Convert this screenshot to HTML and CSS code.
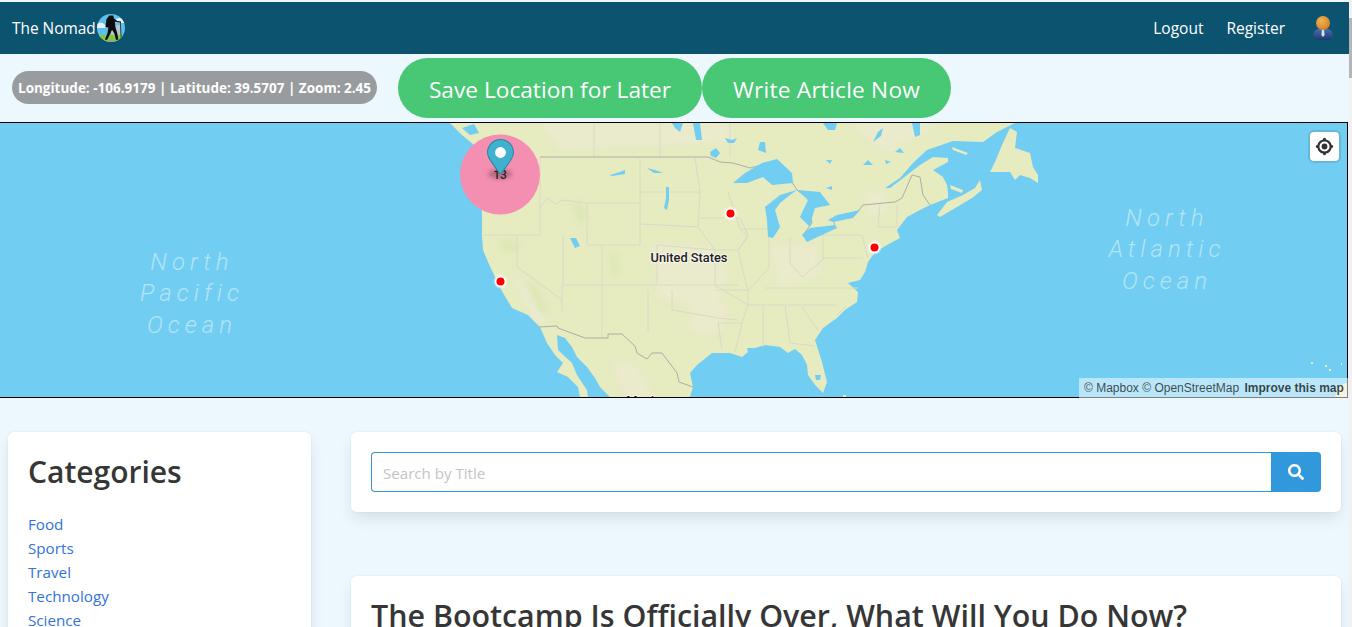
FILE: index.html
```html
<!DOCTYPE html>
<html lang="en">
<head>
  <meta charset="UTF-8" />
  <meta name="viewport" content="width=device-width, initial-scale=1.0"/>
  <title>The Nomad</title>
  <link rel="stylesheet" href="styles.css">
</head>
<body>
  <div class="page">
    <nav class="navbar">
      <a class="brand" href="#">The Nomad
        <svg class="brand-logo" width="28" height="28" viewBox="0 0 28 28">
          <defs><clipPath id="logoClip"><circle cx="14" cy="14" r="14"/></clipPath></defs>
          <g clip-path="url(#logoClip)">
            <rect width="28" height="28" fill="#5cc0ee"/>
            <path d="M0 10q4-3 7 0t6 0v4H0zM19 5q4-2 7 0t2 4h-9z" fill="#e4f5fc"/>
            <path d="M14 12h3v10h-3zM19 11h4v11h-4z" fill="#b9c6cc"/>
            <rect y="21" width="28" height="7" fill="#86c83c"/>
            <path d="M10 26h8v2h-8z" fill="#9aa0a0"/>
            <path d="M12.300 1.500l4 0 .6 3 3.500 2.500 3.700 .5-.3 1.300-4.200-.5-1.800-1 .5 5.500 2 6.500 1 6.500h-2.300l-1.500-6-2.500-4-2 4.500-2.800 5.500h-2.300l2.700-7 .8-5-3-.5 1-8z" fill="#0d0d0d"/>
            <path d="M23 8l.8 0 .8 17h-.8z" fill="#222"/>
          </g>
        </svg>
      </a>
      <div class="nav-end">
        <a class="nav-link" href="#">Logout</a>
        <a class="nav-link" href="#">Register</a>
        <svg class="nav-user" width="22" height="26" viewBox="0 0 22 26">
          <defs>
            <radialGradient id="headFill" cx=".4" cy=".35" r=".7"><stop offset="0" stop-color="#f4b455"/><stop offset="1" stop-color="#cf7f1e"/></radialGradient>
            <linearGradient id="bodyFill" x1="0" y1="0" x2="0" y2="1"><stop offset="0" stop-color="#4a74b4"/><stop offset="1" stop-color="#1c3a70"/></linearGradient>
          </defs>
          <path d="M1 21c0-5 4-8 10-8s10 3 10 8c0 3-4 4-10 4S1 24 1 21z" fill="url(#bodyFill)"/>
          <path d="M10 14h2l.6 6-1.600 2-1.600-2z" fill="#d5e2ef"/>
          <circle cx="11" cy="8" r="7" fill="url(#headFill)"/>
        </svg>
      </div>
    </nav>

    <div class="toolbar">
      <div class="coords">Longitude: -106.9179 | Latitude: 39.5707 | Zoom: 2.45</div>
      <div class="toolbar-buttons">
        <button class="pill-btn pill-save">Save Location for Later</button>
        <button class="pill-btn pill-write">Write Article Now</button>
      </div>
    </div>

    <div class="map">
      <svg class="map-canvas" width="1347" height="274" viewBox="0 123 1347 274" preserveAspectRatio="none">
        <defs>
          <filter id="soft" x="-20%" y="-20%" width="140%" height="140%"><feGaussianBlur stdDeviation="3"/></filter>
          <clipPath id="landClip">
            <path d="M450 123L462 135 474 145 480 180 482 215 482 235 483 250 488 262 495 277 503 293 512 308 528 315 540 327 547 343 555 355 563 363 557 372 568 377 578 387 580 397 588 397 587 390 577 375 572 363 558 350 557 335 565 338 572 347 577 357 587 367 595 378 600 387 610 397 690 397 693 387 690 373 697 365 712 353 730 353 742 357 748 352 747 348 755 348 765 345 780 347 788 353 795 349 802 355 807 365 808 375 815 385 823 393 827 382 822 362 815 340 823 328 837 318 845 310 857 302 858 292 848 283 860 280 865 272 868 262 875 252 887 245 900 238 897 230 907 217 920 210 930 205 948 198 948 193 947 185 943 177 933 170 948 162 948 158 933 157 920 165 907 175 890 188 885 188 900 178 913 163 927 150 953 141 983 142 997 132 1015 123z"/>
          </clipPath>
        </defs>

        <rect class="ocean" x="0" y="123" width="1347" height="274"/>

        <path class="land" d="M450 123L462 135 474 145 480 180 482 215 482 235 483 250 488 262 495 277 503 293 512 308 528 315 540 327 547 343 555 355 563 363 557 372 568 377 578 387 580 397 588 397 587 390 577 375 572 363 558 350 557 335 565 338 572 347 577 357 587 367 595 378 600 387 610 397 690 397 693 387 690 373 697 365 712 353 730 353 742 357 748 352 747 348 755 348 765 345 780 347 788 353 795 349 802 355 807 365 808 375 815 385 823 393 827 382 822 362 815 340 823 328 837 318 845 310 857 302 858 292 848 283 860 280 865 272 868 262 875 252 887 245 900 238 897 230 907 217 920 210 930 205 948 198 948 193 947 185 943 177 933 170 948 162 948 158 933 157 920 165 907 175 890 188 885 188 900 178 913 163 927 150 953 141 983 142 997 132 1015 123z"/>
        <path class="land" d="M990 172L995 162 1002 145 1010 128 1017 132 1015 148 1030 153 1033 167 1038 175 1038 183 1030 178 1020 175 1015 180 1010 172z"/>
        <path class="land" d="M937 215L947 202 963 195 975 188 980 180 982 190 972 198 957 207 940 217z"/>
        <path class="land" d="M950 185L963 190 962 193 951 189zM952 147L968 153 966 155 953 150z"/>
        <path class="land" d="M843 395h3v3h-3zM1335 397l3-9 5-4 4-1v14z"/>
        <path class="land" d="M1311 362h2v2h-2zM1325 365h2v2h-2zM1341 363h1v2h-1zM1329 369h2v2h-2z"/>

        <g clip-path="url(#landClip)">
          <g class="beige" filter="url(#soft)">
            <path d="M540 123H730V142L640 146 560 150zM650 245h60l20 30-15 30-55-5zM770 245h45l8 30-45 10zM850 123h90l-55 30zM510 270l15 10 25 40-15 5zM690 300l40 5-10 30-30-5zM610 360l25 5 20 32h-30zM865 195l18-5 6 20-20 8z"/>
          </g>
          <g class="sage" filter="url(#soft)">
            <path d="M572 205l10-3 5 18-8 4zM610 255l6-3 3 22-7 2zM525 280l12 8 12 25-8 0zM500 240l20 2-4 10-14-2z"/>
          </g>
        </g>

        <g class="borders">
          <path d="M483 235H540M540 158V235M540 208l7-10 8 6 8-4 24 3M640 158V245M594 123V157M660 123V157M730 123V157M587 203H640M587 203V245H640"/>
          <path d="M640 192H700M640 224l58 3M695 158l5 34 -2 35 17 23V285M700 218H740L748 235 738 250 715 250 657 245M517 235V267L562 300M563 235V285M602 245V338M657 245V285M562 285H738"/>
          <path d="M562 285V312M648 290V332M672 290V310L718 318 738 320M728 192L740 229 748 237 738 250 748 291M740 229H768M769 238V268L748 291 748 305 714 285M790 238V263M802 235H862M823 235V258H863M880 203L878 227H897M897 227V205"/>
          <path d="M715 290H748M765 288H858M748 305H837M718 323H742L748 305M718 323L722 350M742 323L735 352M763 305V347M785 305L790 343 815 346M802 307L818 330M837 315L846 306M862 235L868 258M825 258L802 277 790 263"/>
        </g>
        <path class="intl" d="M540 157H708L720 162 733 163 750 168 762 165 792 182 797 190 808 198 812 223 803 235 807 238 835 227 833 218 853 217 863 205 895 202 902 198 912 175 920 177 923 195 930 205"/>
        <path class="intl" d="M539 327L557 326 558 328 585 338H608V334H622L635 346 637 353 647 359 652 353H662L677 373 679 382 693 387"/>

        <g class="ocean">
          <path d="M733 183L745 173 762 163 777 159 792 173 793 183 772 185 763 177 747 183z"/>
          <path d="M765 207L780 195 797 190 790 195 780 203 775 210 780 227 773 238 768 237 767 220z"/>
          <path d="M797 190L820 192 830 205 815 208 812 218 810 227 800 217 808 200z"/>
          <path d="M802 235L810 228 835 225 837 228 807 242z"/>
          <path d="M828 220L837 215 860 210 853 218 833 222z"/>
          <path d="M610 175L620 172 625 170 625 174 612 176zM647 168L655 170 663 173 654 173zM666 187L669 187 669 200 667 210 664 208 666 198zM570 238L576 238 580 246 575 248zM672 123L683 123 680 132 675 128zM693 123L700 123 702 140 696 140zM710 152L716 148 720 153 716 158 711 156zM725 138L732 140 737 138 734 143 728 143zM823 123L837 123 835 130 828 130zM873 142L878 132 883 128 881 136zM912 123L920 123 920 135 915 137zM895 152L900 148 904 153zM863 165L868 160 873 165zM885 160L891 162 886 164zM826 160L832 160 830 164zM826 188L832 186 832 190zM760 142L765 142 766 153 758 150zM815 375L821 375 820 380 816 380z"/>
          <path d="M474 124L479 133 470 135 462 128z"/>
        </g>

        <text class="ocean-label" x="192" y="270">North</text>
        <text class="ocean-label" x="192" y="301">Pacific</text>
        <text class="ocean-label" x="192" y="333">Ocean</text>
        <text class="ocean-label" x="1167" y="226">North</text>
        <text class="ocean-label" x="1167" y="257">Atlantic</text>
        <text class="ocean-label" x="1167" y="289">Ocean</text>
        <text class="country-label" x="689" y="262">United States</text>
        <text class="country-label" x="647" y="405">Mexico</text>

        <circle class="cluster" cx="500" cy="174.500" r="40"/>
        <ellipse class="pin-shadow" cx="500" cy="174" rx="12" ry="5"/>
        <text class="cluster-count" x="500" y="179">13</text>

        <g transform="translate(487 139)">
          <path class="pin" d="M27,13.5C27,19.07 20.25,27 14.75,34.5C14.02,35.5 12.98,35.5 12.25,34.5C6.75,27 0,19.22 0,13.5C0,6.04 6.04,0 13.5,0C20.96,0 27,6.04 27,13.5Z"/>
          <path class="pin-edge" fill-rule="evenodd" d="M13.5,0C6.04,0 0,6.04 0,13.5C0,19.22 6.75,27 12.25,34.5C13,35.52 14.02,35.5 14.75,34.5C20.25,27 27,19.07 27,13.5C27,6.04 20.96,0 13.5,0ZM13.5,1C20.42,1 26,6.58 26,13.5C26,15.9 24.5,19.18 22.22,22.74C19.95,26.3 16.71,30.14 13.94,33.91C13.74,34.18 13.61,34.32 13.5,34.44C13.39,34.32 13.26,34.18 13.06,33.91C10.28,30.13 7.41,26.31 5.02,22.77C2.62,19.23 1,15.95 1,13.5C1,6.58 6.58,1 13.5,1Z"/>
          <circle class="pin-eye" cx="13.5" cy="13.500" r="5.400"/>
        </g>

        <g class="spot" transform="translate(730.500 213.500)"><circle class="spot-halo" r="7"/><circle class="spot-ring" r="5.500"/><circle class="spot-dot" r="4"/></g>
        <g class="spot" transform="translate(874.500 247.500)"><circle class="spot-halo" r="7"/><circle class="spot-ring" r="5.500"/><circle class="spot-dot" r="4"/></g>
        <g class="spot" transform="translate(500.500 281.500)"><circle class="spot-halo" r="7"/><circle class="spot-ring" r="5.500"/><circle class="spot-dot" r="4"/></g>
      </svg>

      <button class="geo-btn" aria-label="Find my location">
        <svg width="29" height="29" viewBox="0 0 20 20">
          <path d="M10 4C9 4 9 5 9 5v.1A5 5 0 0 0 5.100 9H5s-1 0-1 1 1 1 1 1h.1A5 5 0 0 0 9 14.900v.1s0 1 1 1 1-1 1-1v-.1a5 5 0 0 0 3.900-3.900h.1s1 0 1-1-1-1-1-1h-.1A5 5 0 0 0 11 5.100V5s0-1-1-1zm0 2.500a3.500 3.500 0 1 1 0 7 3.500 3.500 0 1 1 0-7z"/>
          <circle cx="10" cy="10" r="2"/>
        </svg>
      </button>
      <div class="attribution">
        <span>© Mapbox</span> <span>© OpenStreetMap</span> <strong>Improve this map</strong>
      </div>
    </div>

    <main class="content">
      <aside class="box categories">
        <h2 class="categories-title">Categories</h2>
        <ul class="category-list">
          <li><a href="#">Food</a></li>
          <li><a href="#">Sports</a></li>
          <li><a href="#">Travel</a></li>
          <li><a href="#">Technology</a></li>
          <li><a href="#">Science</a></li>
        </ul>
      </aside>
      <section class="articles">
        <div class="box search-box">
          <input class="search-input" type="text" placeholder="Search by Title">
          <button class="search-btn" aria-label="Search">
            <svg width="16" height="16" viewBox="0 0 512 512"><path d="M505 442.700L405.300 343c-4.500-4.500-10.600-7-17-7H372c27.600-35.300 44-79.700 44-128C416 93.100 322.900 0 208 0S0 93.100 0 208s93.100 208 208 208c48.300 0 92.700-16.400 128-44v16.300c0 6.400 2.500 12.500 7 17l99.700 99.700c9.400 9.400 24.600 9.400 33.900 0l28.300-28.300c9.400-9.400 9.400-24.600.1-34zM208 336c-70.700 0-128-57.200-128-128 0-70.700 57.200-128 128-128 70.700 0 128 57.200 128 128 0 70.700-57.200 128-128 128z"/></svg>
          </button>
        </div>
        <article class="box article">
          <h1 class="article-title">The Bootcamp Is Officially Over, What Will You Do Now?</h1>
        </article>
      </section>
    </main>
  </div>
  <div class="scrollbar"><div class="scrollbar-thumb"></div></div>
</body>
</html>
```

FILE: styles.css
```css
* {
  box-sizing: border-box;
}
html, body {
  height: 627px;
  margin: 0;
  overflow: hidden;
}
body {
  display: flex;
  background-color: #ecf7fe;
  color: #363636;
  font-family: "Open Sans", sans-serif;
}
a {
  color: inherit;
  text-decoration: none;
}
button {
  font-family: inherit;
  border: none;
  cursor: pointer;
}

.page {
  flex: 1;
  min-width: 0;
  padding-top: 2px;
}
.scrollbar {
  width: 3px;
  background-color: #f1f1f1;
}
.scrollbar-thumb {
  height: 60px;
  margin-top: 18px;
  background-color: #b5b5b5;
}

/* navbar */
.navbar {
  display: flex;
  justify-content: space-between;
  align-items: center;
  height: 52px;
  padding: 0 15px 0 12px;
  background-color: #0c5370;
  color: #fff;
}
.brand {
  display: flex;
  align-items: center;
  gap: 1px;
  font-size: 15.400px;
}
.nav-end {
  display: flex;
  align-items: center;
}
.nav-link {
  margin-right: 23px;
  font-size: 15.500px;
}
.nav-user {
  margin-left: 4px;
}

/* coordinates + actions */
.toolbar {
  display: flex;
  align-items: center;
  height: 68px;
  padding-left: 12px;
}
.coords {
  width: 365px;
  height: 33px;
  margin-top: -1px;
  padding: 1px 0 0 6px;
  border-radius: 17px;
  background-color: #999c9f;
  color: #fff;
  font-size: 13.500px;
  font-weight: 700;
  line-height: 33px;
  white-space: nowrap;
}
.toolbar-buttons {
  display: flex;
  margin-left: 21px;
}
.pill-btn {
  height: 60px;
  padding: 2px 0 0;
  border-radius: 30px;
  background-color: #48c774;
  color: #fff;
  font-size: 22.700px;
  white-space: nowrap;
}
.pill-save {
  width: 304px;
}
.pill-write {
  width: 249px;
  letter-spacing: 0.2px;
}

/* map */
.map {
  position: relative;
  height: 276px;
  margin-right: 1px;
  border: 1px solid #000;
  border-left: none;
}
.map-canvas {
  display: block;
}
.ocean {
  fill: #72cdf2;
}
.land {
  fill: #e6ebc0;
}
.beige {
  fill: #ecead0;
  opacity: 0.8;
}
.sage {
  fill: #dce6b2;
}
.borders {
  fill: none;
  stroke: #dadac8;
  stroke-width: 1;
}
.intl {
  fill: none;
  stroke: #aeaea6;
  stroke-width: 1;
}
.ocean-label {
  fill: #b4e4f8;
  font-family: Roboto, sans-serif;
  font-size: 24px;
  font-style: italic;
  font-weight: 300;
  letter-spacing: 5px;
  text-anchor: middle;
}
.country-label {
  fill: #222;
  font-family: Roboto, sans-serif;
  font-size: 12.800px;
  font-weight: 500;
  text-anchor: middle;
  paint-order: stroke;
  stroke: rgba(255, 255, 255, 0.6);
  stroke-width: 2px;
}
.cluster {
  fill: #f48fb1;
}
.pin-shadow {
  fill: #000;
  opacity: 0.25;
  filter: blur(2px);
}
.cluster-count {
  fill: #222;
  font-family: Roboto, sans-serif;
  font-size: 12px;
  font-weight: 500;
  text-anchor: middle;
}
.pin {
  fill: #3fb1ce;
}
.pin-edge {
  fill: #000;
  opacity: 0.25;
}
.pin-eye {
  fill: #fff;
}
.spot-halo {
  fill: #fff;
  opacity: 0.4;
}
.spot-ring {
  fill: #fff;
}
.spot-dot {
  fill: #f00;
}
.geo-btn {
  position: absolute;
  top: 9px;
  right: 8px;
  width: 29px;
  height: 29px;
  padding: 0;
  border-radius: 4px;
  background-color: #fff;
  box-shadow: 0 0 0 2px rgba(0, 0, 0, 0.1);
}
.geo-btn svg {
  display: block;
  fill: #333;
}
.attribution {
  position: absolute;
  right: -1px;
  bottom: -1px;
  width: 269px;
  height: 20px;
  padding-left: 5px;
  background-color: rgba(255, 255, 255, 0.5);
  color: rgba(0, 0, 0, 0.7);
  font-family: "Liberation Sans", sans-serif;
  font-size: 12px;
  line-height: 20px;
  white-space: nowrap;
}
.attribution strong {
  margin-left: 2px;
  font-weight: 600;
  color: rgba(0, 0, 0, 0.72);
}

/* page content */
.content {
  display: grid;
  grid-template-columns: 303px 1fr;
  gap: 40px;
  padding: 34px 8px 0;
}
.box {
  padding: 20px;
  border-radius: 6px;
  background-color: #fff;
  box-shadow: 0 8px 16px -2px rgba(10, 10, 10, 0.1), 0 0 0 1px rgba(10, 10, 10, 0.02);
}
.categories {
  height: 400px;
}
.categories-title {
  margin: 0 0 20px;
  font-size: 30px;
  font-weight: 600;
  line-height: 40px;
}
.category-list {
  margin: 0;
  padding: 0;
  list-style: none;
  color: #3273dc;
  font-size: 15.200px;
  line-height: 24px;
}
.search-box {
  display: flex;
  height: 80px;
  margin-bottom: 64px;
}
.search-input {
  flex: 1;
  height: 40px;
  padding: 2px 11px 0;
  border: 1px solid #3298dc;
  border-right: none;
  border-radius: 4px 0 0 4px;
  font-family: inherit;
  font-size: 15.100px;
  outline: none;
}
.search-input::placeholder {
  color: #c4c4c4;
}
.search-btn {
  width: 50px;
  height: 40px;
  border-radius: 0 4px 4px 0;
  background-color: #3298dc;
  fill: #fff;
}
.search-btn svg {
  display: block;
  margin: auto;
}
.article-title {
  margin: 0;
  font-size: 30.400px;
  font-weight: 600;
  line-height: 40px;
}
```
